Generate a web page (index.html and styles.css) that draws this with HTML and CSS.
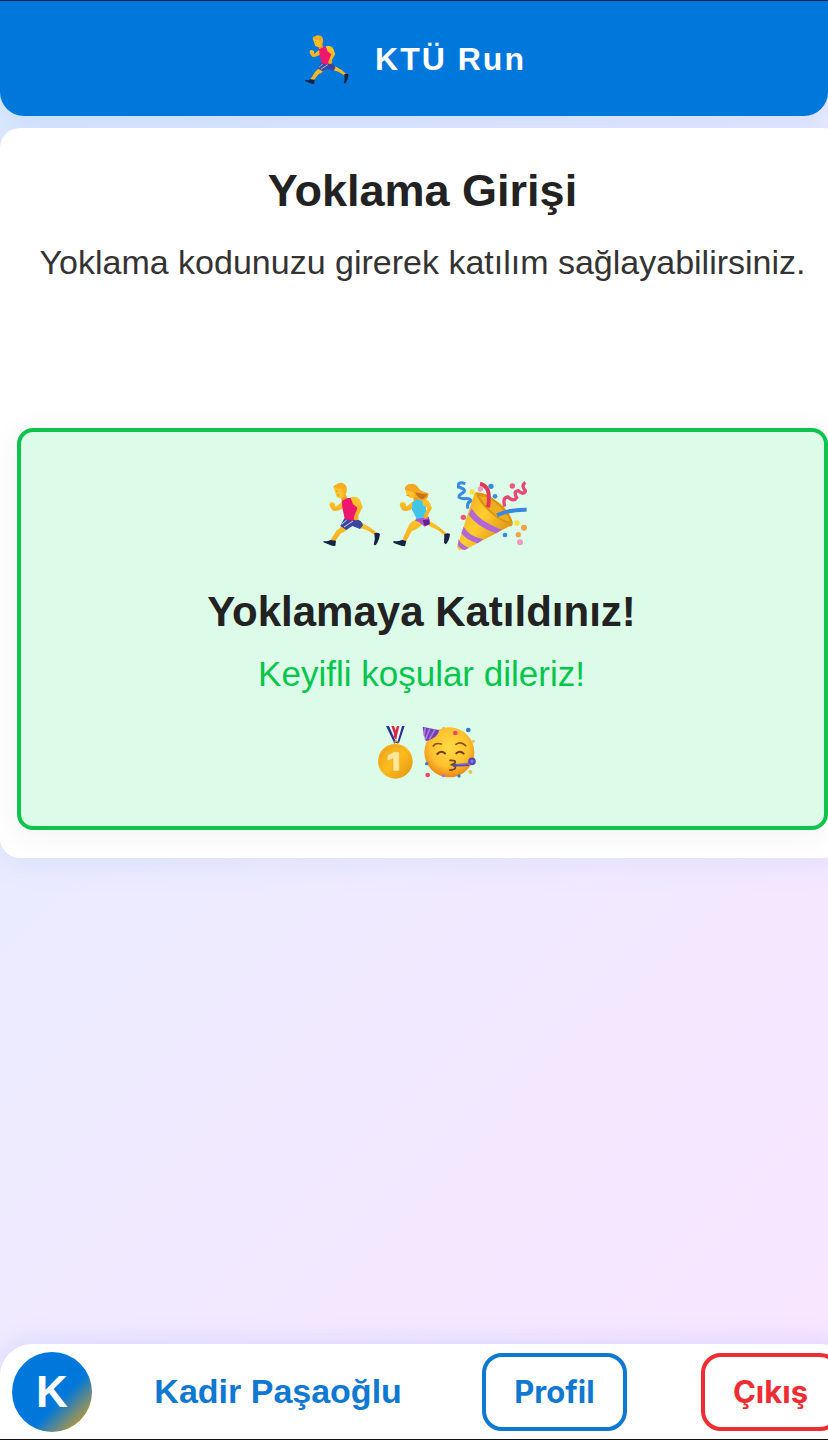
FILE: index.html
```html
<!DOCTYPE html>
<html lang="tr">
<head>
<meta charset="utf-8">
<meta name="viewport" content="width=device-width, initial-scale=1">
<title>KTÜ Run</title>
<link rel="stylesheet" href="styles.css">
</head>
<body>
<svg class="defs" aria-hidden="true">
  <defs>
    <linearGradient id="skin" x1="0" y1="0" x2="0" y2="1"><stop offset="0" stop-color="#ffc72c"/><stop offset="1" stop-color="#f7ac1e"/></linearGradient>
    <linearGradient id="cone" x1="0" y1="0" x2="1" y2="0.7"><stop offset="0" stop-color="#e9a01c"/><stop offset="0.5" stop-color="#ffce2e"/><stop offset="1" stop-color="#d98b12"/></linearGradient>
    <radialGradient id="face" cx="0.5" cy="0.4" r="0.6"><stop offset="0" stop-color="#ffdb45"/><stop offset="0.65" stop-color="#ffc02e"/><stop offset="1" stop-color="#ea8616"/></radialGradient>
    <linearGradient id="gold" x1="0" y1="0" x2="1" y2="1"><stop offset="0" stop-color="#e9a416"/><stop offset="0.5" stop-color="#fcbc1f"/><stop offset="1" stop-color="#e0920c"/></linearGradient>
    <symbol id="runner" viewBox="21 30 210 210">
      <path d="M100 158 Q94 173 80 181 L61 211 L73 217 L93 190 Q113 183 122 166Z" fill="url(#skin)"/>
      <path d="M125 163 L150 174 Q172 178 195 196 L200 188 Q181 170 157 159Z" fill="url(#skin)"/>
      <path d="M41 213 Q52 215 61 210 L78 212 L76 228 L66 227 L40 217Z" fill="#172346"/>
      <path d="M193 190 Q203 186 210 192 Q207 214 197 226 L191 224 Q197 207 193 190Z" fill="#172346"/>
      <path d="M103 145 L136 147 Q156 150 159 166 L150 177 L127 168 L109 180 L91 168Z" fill="#3b469f"/>
      <path d="M95 163 L110 150 M102 171 L129 153" stroke="#cdd4f5" stroke-width="3"/>
      <path d="M98 94 L76 112 Q77 99 71 98 Q60 93 58 103 Q59 113 68 121 Q78 127 100 115Z" fill="url(#skin)"/>
      <path d="M90 76 L108 74 L112 88 L96 94Z" fill="#f09d18"/>
      <path d="M95 93 L113 84 L131 84 L143 112 L136 149 Q120 155 104 146 L98 118Z" fill="#ee176f"/>
      <path d="M121 82 Q143 76 151 92 L158 112 L145 136 Q149 151 136 151 Q128 149 133 137 L143 113 L129 103Z" fill="url(#skin)"/>
      <path d="M72 56 Q74 43 90 42 Q106 42 109 58 Q109 78 99 83 Q88 86 80 80 L76 68Z" fill="#ffc12a"/>
      <path d="M72 56 Q66 48 78 44 Q91 34 103 42 Q113 49 110 64 Q107 78 102 79 Q101 72 101 65 Q97 64 96 56 Q82 56 75 52Z" fill="#f9ad20"/>
      <path d="M78 64 L83 63 M82 75 L87 75" stroke="#b8782a" stroke-width="2"/>
    </symbol>
    <symbol id="woman" viewBox="15 30 210 210">
      <path d="M105 147 Q84 154 77 173 L62 207 L73 213 L89 184 Q111 175 126 158Z" fill="url(#skin)"/>
      <path d="M124 158 L148 171 Q165 177 188 196 L193 190 Q176 171 141 152Z" fill="url(#skin)"/>
      <path d="M34 213 Q48 215 61 209 L73 213 L69 229 L58 227 L35 219Z" fill="#172346"/>
      <path d="M187 193 Q197 187 204 192 Q202 214 191 223 L186 218Z" fill="#172346"/>
      <path d="M104 144 L141 140 L144 162 L128 170 L112 157 L99 152Z" fill="#ac54d1"/>
      <path d="M122 151 L142 148 L143 163 L128 168Z" fill="#63208e"/>
      <path d="M94 94 L72 110 Q73 98 66 97 Q55 93 53 103 Q54 113 62 121 Q73 127 95 114Z" fill="url(#skin)"/>
      <path d="M93 79 L108 76 L112 91 L96 96Z" fill="#f09d18"/>
      <path d="M91 96 L111 86 L127 87 L132 112 L132 140 L104 147 Q98 132 90 120Z" fill="#3fc6e8"/>
      <path d="M118 86 Q138 86 143 98 L150 114 L138 135 Q139 147 129 146 Q122 143 127 134 L136 114 L124 106Z" fill="url(#skin)"/>
      <path d="M70 58 Q84 48 101 57 L101 78 Q94 87 80 82 L72 69Z" fill="#ffc12a"/>
      <path d="M69 60 Q66 48 80 43 Q101 37 110 55 Q119 66 139 69 Q142 84 128 91 Q109 94 98 78 Q98 66 82 62Z" fill="#f4a723"/>
      <path d="M100 66 Q114 72 137 73 Q130 87 119 88 Q105 83 100 66Z" fill="#c9731b"/>
      <path d="M73 76 L81 76" stroke="#b77415" stroke-width="2"/>
    </symbol>
    <symbol id="popper" viewBox="24 30 210 210">
      <path d="M49 41 Q25 33 28 51 Q58 59 39 70 Q18 84 45 86 Q65 84 66 93 Q52 98 57 116" fill="none" stroke="#348be3" stroke-width="9"/>
      <path d="M77 68 Q103 66 129 84 Q179 112 191 156 Q193 171 181 169 L49 239 Q31 247 24 232Z" fill="url(#cone)"/>
      <path d="M79 68 Q112 65 149 99 Q183 128 190 156 Q173 165 143 143 Q98 112 79 68Z" fill="#d9930f"/>
      <path d="M91 79 Q119 78 150 108 Q178 134 183 154 Q164 154 139 134 Q108 109 91 79Z" fill="#eead20"/>
      <path d="M68 114 Q86 151 158 179 L141 190 Q82 169 59 134Z M44 170 Q59 198 103 208 L87 220 Q52 211 37 189Z M29 208 Q37 225 59 233 L48 240 Q34 238 26 226Z" fill="#b168d4"/>
      <path d="M117 112 Q123 78 116 60 Q109 44 93 41" fill="none" stroke="#e7365d" stroke-width="12"/>
      <path d="M144 136 Q179 118 233 119" fill="none" stroke="#3988dd" stroke-width="12"/>
      <path d="M167 110 Q160 81 177 81 Q195 97 203 83 Q192 64 208 62 Q223 77 230 63 Q215 49 229 37" fill="none" stroke="#e74774" stroke-width="10"/>
      <g fill="#398bdb"><circle cx="126" cy="49" r="8"/><circle cx="138" cy="79" r="7"/><circle cx="168" cy="195" r="7"/></g>
      <g fill="#ef5773"><circle cx="190" cy="48" r="8"/><circle cx="43" cy="142" r="8"/></g>
      <g fill="#ee9bbd"><circle cx="94" cy="57" r="8"/><circle cx="213" cy="217" r="9"/></g>
      <g fill="#f3a14b"><circle cx="225" cy="173" r="9"/><circle cx="208" cy="194" r="8"/></g>
      <g fill="#f3e33d"><circle cx="69" cy="66" r="8"/><circle cx="204" cy="159" r="8"/></g>
    </symbol>
    <symbol id="medal" viewBox="9 30 162 162">
      <path d="M63 33 L76 33 L97 77 L88 85Z" fill="#24348f"/>
      <path d="M72 33 L81 33 L97 72 L93 81Z" fill="#f5f5fa"/>
      <path d="M79 33 L87 33 L99 65 L94 76Z" fill="#d82845"/>
      <path d="M107 33 L119 33 L102 84 L90 84Z" fill="#24348f"/>
      <path d="M101 33 L111 33 L99 76 L91 83Z" fill="#f5f5fa"/>
      <path d="M96 33 L103 33 L93 74 L86 65Z" fill="#d82845"/>
      <circle cx="93" cy="83" r="6" fill="none" stroke="#d19316" stroke-width="3"/>
      <circle cx="91" cy="139" r="52" fill="url(#gold)"/>
      <circle cx="91" cy="139" r="45" fill="none" stroke="#eda319" stroke-width="2"/>
      <path d="M87 110 H103 V168 H84 V131 L67 138 V121Z" fill="#ffe596" stroke="#db9c1d" stroke-width="1"/>
    </symbol>
    <symbol id="party" viewBox="171 30 162 162">
      <circle cx="253" cy="112" r="75" fill="url(#face)"/>
      <path d="M173 35 Q192 39 223 45 Q219 68 183 79 Q176 63 173 35Z" fill="#6548b7"/>
      <path d="M181 37 L177 62 M195 40 L181 74 M210 43 L193 73" stroke="#c171e6" stroke-width="5"/>
      <path d="M205 93 Q211 82 229 87 M273 88 Q287 77 302 92" fill="none" stroke="#85520f" stroke-width="5" stroke-linecap="round"/>
      <path d="M217 117 Q227 105 240 115 M274 115 Q285 105 296 116" fill="none" stroke="#6e3c10" stroke-width="6" stroke-linecap="round"/>
      <path d="M255 136 Q274 135 270 144 L260 149 Q275 153 270 161 Q264 166 254 165" fill="none" stroke="#744111" stroke-width="5" stroke-linecap="round"/>
      <path d="M264 151 L312 149" fill="none" stroke="#554bb9" stroke-width="8"/>
      <circle cx="321" cy="139" r="8" fill="#9778e3" stroke="#554bb9" stroke-width="7"/>
      <path d="M275 149 L314 147" stroke="#9778e3" stroke-width="2"/>
      <g fill="#ed4668"><circle cx="271" cy="54" r="7"/><circle cx="188" cy="180" r="7"/></g>
      <g fill="#347cc9"><circle cx="310" cy="45" r="7"/><circle cx="185" cy="146" r="5"/><circle cx="282" cy="183" r="5"/></g>
      <g fill="#f2bf4d"><circle cx="236" cy="40" r="5"/><circle cx="316" cy="171" r="6"/><circle cx="325" cy="79" r="5"/></g>
      <circle cx="235" cy="182" r="5" fill="#ae79d5"/>
    </symbol>
  </defs>
</svg>
<header class="header">
  <svg class="emoji emoji-small" role="img" aria-label="Koşucu"><use href="#runner"/></svg>
  <span class="brand">KTÜ Run</span>
</header>
<main class="card">
  <h1 class="title">Yoklama Girişi</h1>
  <p class="lead">Yoklama kodunuzu girerek katılım sağlayabilirsiniz.</p>
  <section class="success">
    <div class="emoji-row">
      <svg class="emoji emoji-large" role="img" aria-label="Koşan erkek"><use href="#runner"/></svg>
      <svg class="emoji emoji-large" role="img" aria-label="Koşan kadın"><use href="#woman"/></svg>
      <svg class="emoji emoji-large" role="img" aria-label="Konfeti"><use href="#popper"/></svg>
    </div>
    <h2 class="success-title">Yoklamaya Katıldınız!</h2>
    <p class="success-text">Keyifli koşular dileriz!</p>
    <div class="emoji-row">
      <svg class="emoji emoji-small" role="img" aria-label="Altın madalya"><use href="#medal"/></svg>
      <svg class="emoji emoji-small" role="img" aria-label="Kutlama"><use href="#party"/></svg>
    </div>
  </section>
</main>
<footer class="userbar">
  <span class="avatar">K</span>
  <span class="username">Kadir Paşaoğlu</span>
  <button class="btn btn-profile" type="button">Profil</button>
  <button class="btn btn-logout" type="button">Çıkış</button>
</footer>
</body>
</html>
```
FILE: styles.css
```css
* { box-sizing: border-box; }
html { min-height: 100%; }
body {
  display: flex;
  flex-direction: column;
  min-height: 100vh;
  margin: 0;
  border-bottom: 1px solid #111;
  overflow-x: hidden;
  font-family: "Liberation Sans", Arial, sans-serif;
  color: #222;
  background: linear-gradient(135deg, #dbeafe, #eeebff 50%, #f9e5ff);
}
h1, h2, p { margin: 0; }
.defs { position: absolute; width: 0; height: 0; }
.emoji { display: block; flex: none; }
.emoji-small { width: 54px; height: 54px; }
.emoji-large { width: 70px; height: 70px; }
.header {
  display: flex;
  align-items: center;
  justify-content: center;
  gap: 21px;
  padding: 32px 2px 29px 0;
  border-top: 1px solid #06244a;
  border-radius: 0 0 24px 24px;
  background: #0078db;
  box-shadow: 0 4px 24px rgba(0, 120, 219, 0.1);
}
.brand {
  padding-bottom: 2px;
  font-size: 32px;
  line-height: 40px;
  font-weight: 700;
  letter-spacing: 2px;
  color: #fff;
}
.card {
  display: flex;
  flex-direction: column;
  margin: 12px -16px 0 0;
  padding: 36px 16px 28px 17px;
  border-radius: 20px;
  background: #fff;
  text-align: center;
  box-shadow: 0 4px 32px rgba(59, 130, 246, 0.1);
}
.title { font-size: 45px; line-height: 54px; }
.lead {
  margin-top: 23px;
  font-size: 34px;
  line-height: 42px;
  color: #333;
  white-space: nowrap;
}
.success {
  margin-top: 145px;
  padding: 48px 18px 47px 16px;
  border: 4px solid #0fc44c;
  border-radius: 16px;
  background: #dcfce9;
  box-shadow: 0 4px 32px rgba(0, 0, 0, 0.06);
}
.emoji-row { display: flex; justify-content: center; }
.success-title { margin-top: 36px; font-size: 42px; line-height: 52px; }
.success-text {
  margin: 14px 0 29px;
  font-size: 35px;
  line-height: 44px;
  color: #05c54b;
}
.userbar {
  display: flex;
  align-items: center;
  justify-content: space-between;
  height: 95px;
  margin: auto -24px 0 0;
  padding: 0 12px;
  border-radius: 32px 32px 0 0;
  background: #fff;
  box-shadow: 0 -4px 24px rgba(59, 100, 246, 0.13);
}
.avatar {
  display: grid;
  place-items: center;
  width: 80px;
  height: 80px;
  border-radius: 50%;
  background: linear-gradient(135deg, #0078db 60%, #c69a32 90%);
  color: #fff;
  font-size: 44px;
  font-weight: 700;
}
.username {
  padding-right: 18px;
  font-size: 34px;
  font-weight: 700;
  color: #0f78d0;
}
.btn {
  height: 78px;
  padding: 0 28px;
  border: 4px solid;
  border-radius: 20px;
  background: #fff;
  font: 700 31px Inter, sans-serif;
}
.btn-profile { margin-right: 12px; color: #0f78d0; }
.btn-logout { color: #ed2d32; }
```
